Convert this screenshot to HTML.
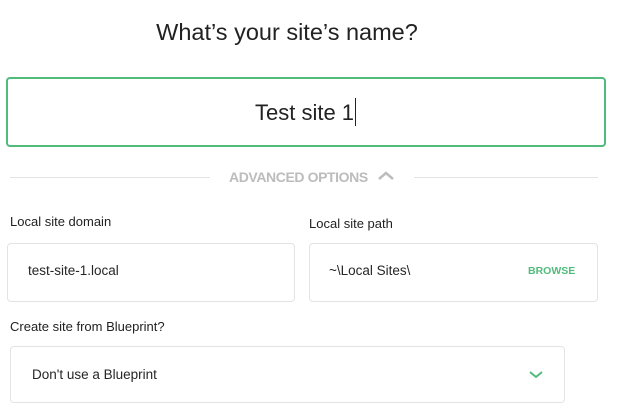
<!DOCTYPE html>
<html><head><style>
body{margin:0;width:624px;height:416px;background:#fff;font-family:"Liberation Sans",sans-serif;color:#262626;position:relative;overflow:hidden}
.a{position:absolute}
.box{position:absolute;border:1px solid #e3e3e3;border-radius:4px;box-sizing:border-box;background:#fff}
.lbl{position:absolute;font-size:13px;color:#222}
</style></head><body>
<div class="a" style="left:0;width:574px;top:19px;text-align:center;font-size:23.5px;color:#222">What’s your site’s name?</div>
<div class="a" style="left:6px;top:77px;width:600px;height:70px;border:2px solid #51bb7b;border-radius:4px;box-sizing:border-box"></div>
<div class="a" style="left:255px;top:98px;font-size:22px;color:#222">Test site 1<span style="display:inline-block;width:1px;height:28px;background:#222;vertical-align:-6px;margin-left:1px"></span></div>
<div class="a" style="left:10px;top:177px;width:200px;height:1px;background:#e3e3e3"></div>
<div class="a" style="left:414px;top:177px;width:184px;height:1px;background:#e3e3e3"></div>
<div class="a" style="left:229px;top:169px;font-size:14px;font-weight:bold;color:#bcbcbc;letter-spacing:-0.4px">ADVANCED OPTIONS</div>
<svg class="a" style="left:377px;top:171px" width="18" height="10"><path d="M2 8 L9 2 L16 8" fill="none" stroke="#bcbcbc" stroke-width="2.5"/></svg>
<div class="lbl" style="left:10px;top:214px">Local site domain</div>
<div class="lbl" style="left:309px;top:216px">Local site path</div>
<div class="box" style="left:7px;top:243px;width:288px;height:59px"></div>
<div class="a" style="left:28px;top:263px;font-size:13.5px">test-site-1.local</div>
<div class="box" style="left:309px;top:243px;width:289px;height:59px"></div>
<div class="a" style="left:329px;top:263px;font-size:13.5px">~\Local Sites\</div>
<div class="a" style="left:528px;top:265px;font-size:10.5px;font-weight:bold;color:#51bb7b">BROWSE</div>
<div class="lbl" style="left:10px;top:319px">Create site from Blueprint?</div>
<div class="box" style="left:10px;top:346px;width:555px;height:57px"></div>
<div class="a" style="left:32px;top:367px;font-size:13.5px">Don't use a Blueprint</div>
<svg class="a" style="left:528px;top:370px" width="16" height="9"><path d="M2 2 L8 7 L14 2" fill="none" stroke="#51bb7b" stroke-width="2"/></svg>
</body></html>
